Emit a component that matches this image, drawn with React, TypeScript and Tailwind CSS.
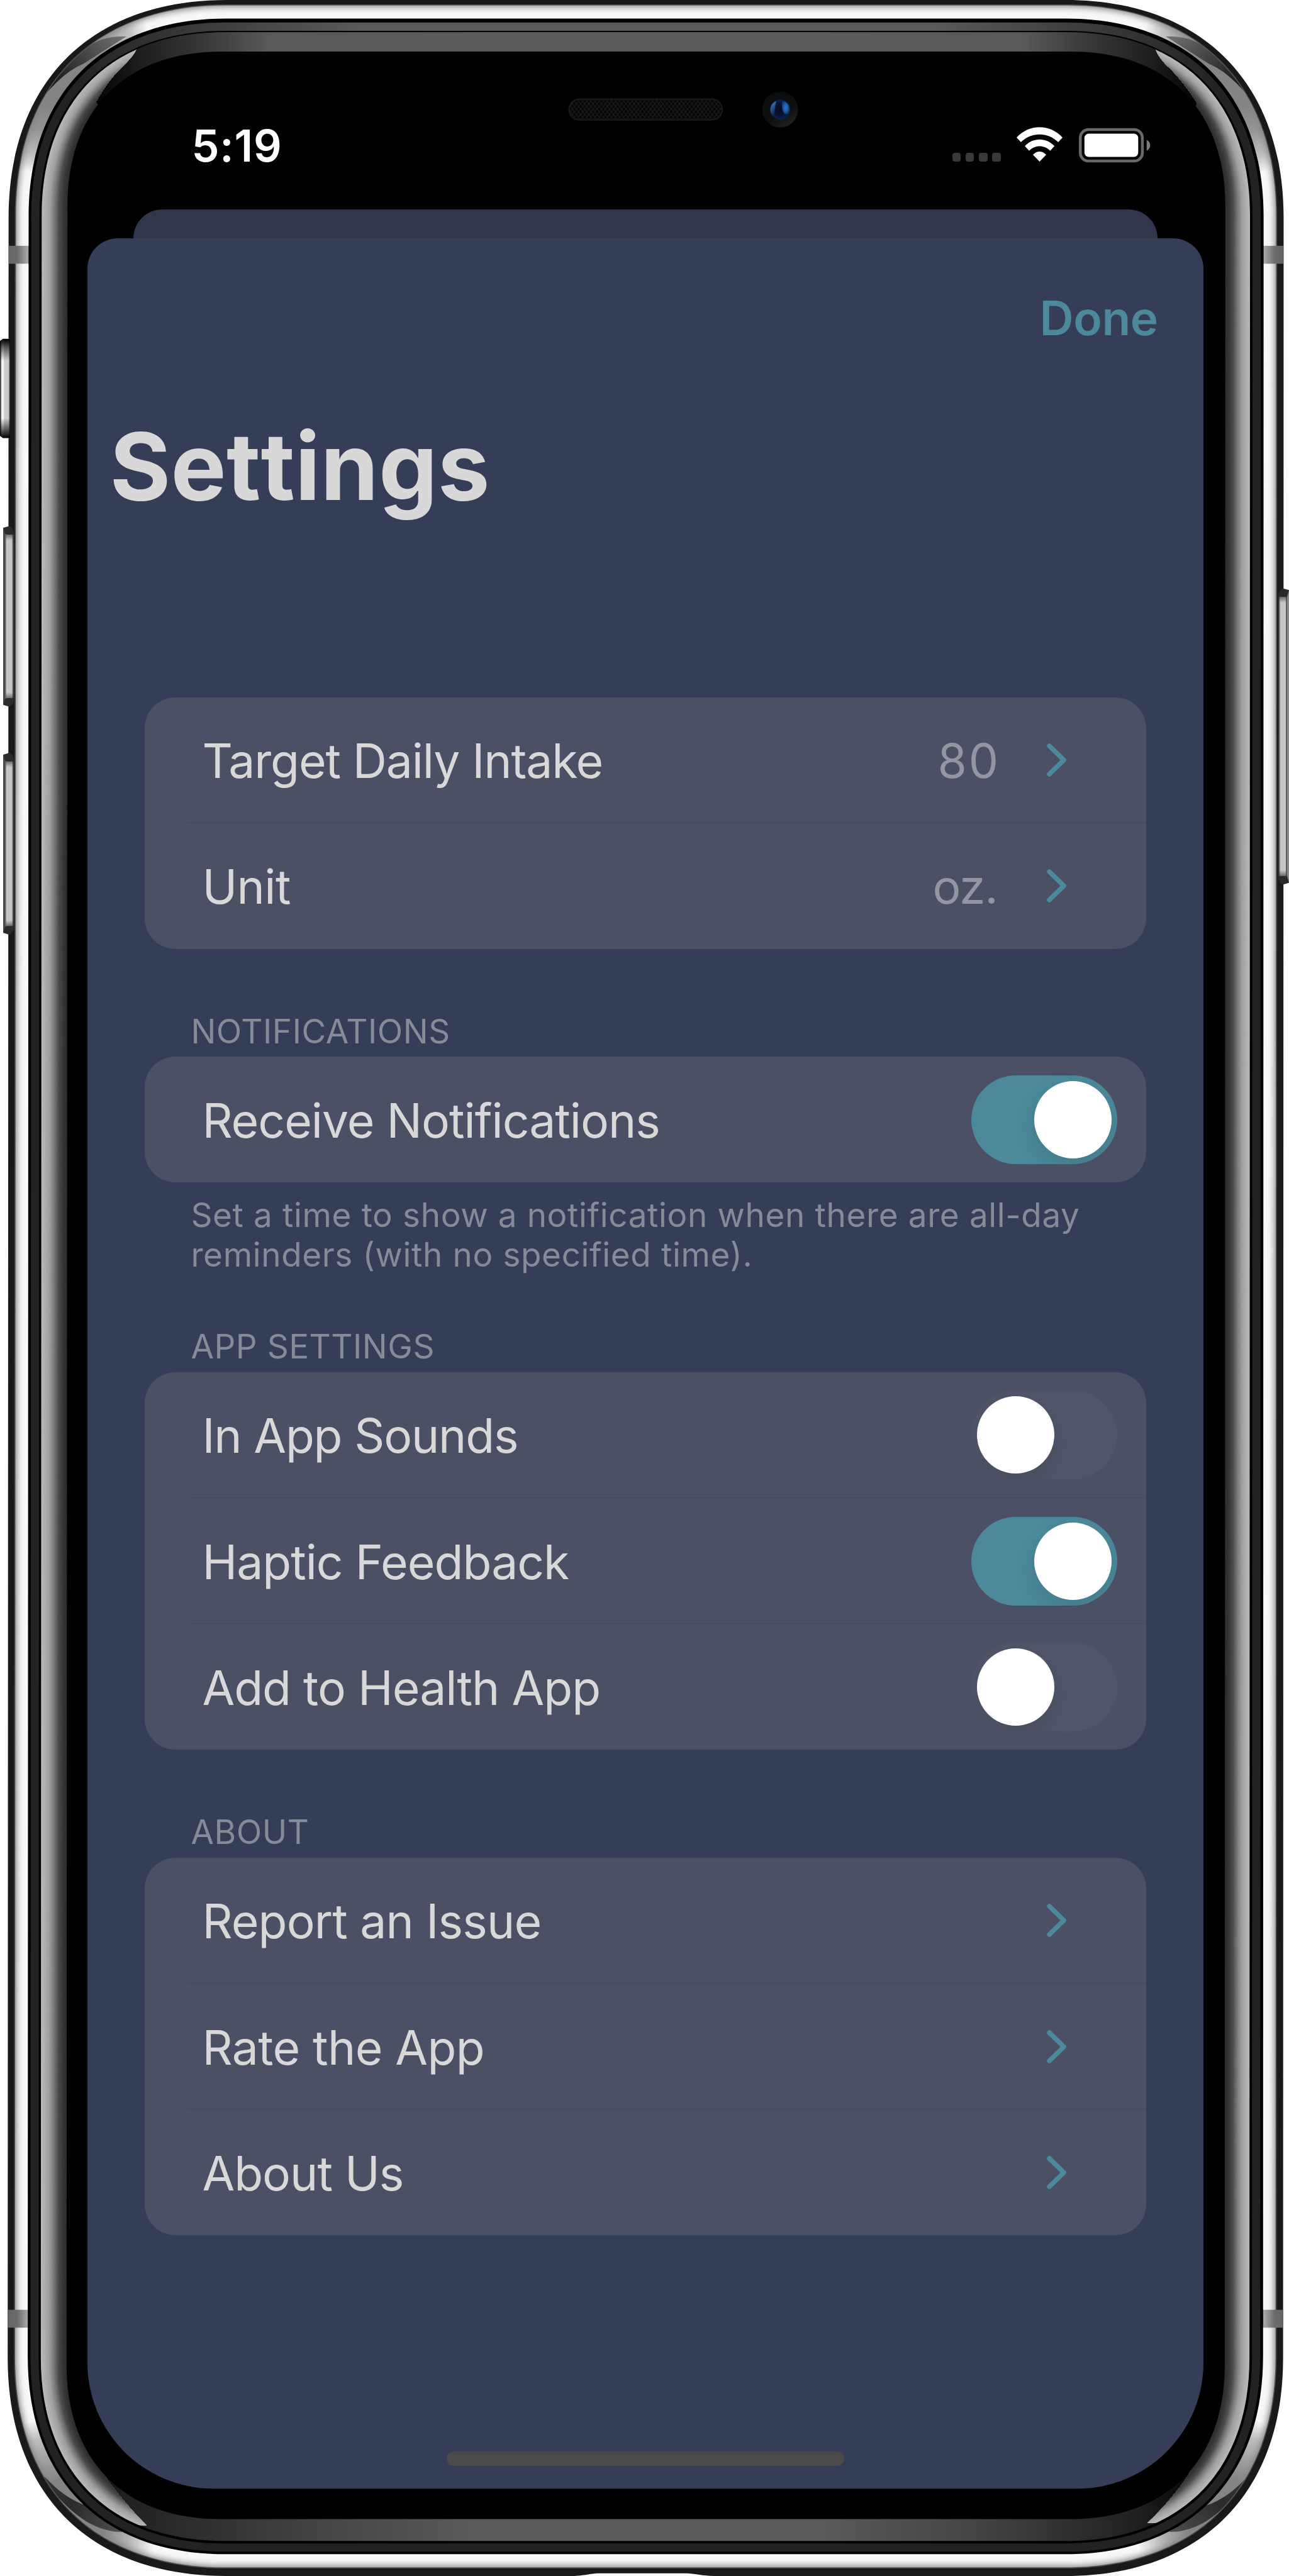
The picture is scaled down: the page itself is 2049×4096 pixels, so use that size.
import type { ReactNode } from "react";

type Edges = [number, number, number, number, number];

/* Rounded phone outline: left, top, right, bottom, corner radius. */
function outline([l, t, r, b, R]: Edges): string {
  const e = R * 1.1;
  const c = e * 0.377;
  const lb = l - 2.5;
  const rb = r - 1.5;
  return `M${l + e},${t}H${r - e}C${r - c},${t} ${r},${t + c} ${r},${t + e}L${rb},${b - e}C${rb},${b - c} ${rb - c},${b} ${rb - e},${b}H${lb + e}C${lb + c},${b} ${lb},${b - c} ${lb},${b - e}L${l},${t + e}C${l},${t + c} ${l + c},${t} ${l + e},${t}Z`;
}

function mix(a: Edges, b: Edges, k: number): Edges {
  return a.map((v, i) => v + (b[i] - v) * k) as Edges;
}

function ramp(stops: [number, number][], k: number): string {
  for (let i = 1; i < stops.length; i++) {
    if (k <= stops[i][0]) {
      const [k0, v0] = stops[i - 1];
      const [k1, v1] = stops[i];
      const v = Math.round(v0 + ((v1 - v0) * (k - k0)) / (k1 - k0));
      return `rgb(${v},${v},${v})`;
    }
  }
  const v = stops[stops.length - 1][1];
  return `rgb(${v},${v},${v})`;
}

const BODY: Edges = [24, 0, 3587, 7199, 554];
const LIP: Edges = [41.5, 12.5, 3569, 7178, 537];
const STEEL: Edges = [44.5, 15, 3566, 7175, 534];
const GAP: Edges = [80, 52, 3531, 7138, 502];
const GASKET: Edges = [87.5, 63, 3523, 7131, 494];
const SEAM: Edges = [110.5, 86, 3500, 7108, 471];
const BEZEL: Edges = [116.5, 90, 3493, 7101, 465];
const GLASS: Edges = [188.5, 144, 3424, 7040, 392];

const steps = (n: number) => Array.from({ length: n }, (_, i) => i / n);

function CornerShine() {
  return (
    <g>
      <path d="M0,130H190V480H0Z" fill="url(#shineSide)" />
      <path d="M120,0H470V300H120Z" fill="url(#shineTop)" />
      <path d="M40,280L120,273C150,235 190,196 232,179L353,102C310,100 255,108 204,166L120,230Z" fill="url(#swoosh)" />
      <path d="M0,6740H250V7060H0Z" fill="url(#shineSideB)" />
      <path d="M172,6900H520V7199H130Z" fill="url(#shineBottom)" />
      <path d="M100,6915L126,6923C160,6958 195,6988 244,7003L344,7076C290,7076 235,7055 172,6989Z" fill="url(#swooshB)" />
    </g>
  );
}

function SideKey({ x, y, h, flip }: { x: number; y: number; h: number; flip?: boolean }) {
  return (
    <g transform={flip ? `translate(${2 * x},0) scale(-1,1)` : undefined}>
      <path d={`M${x},${y + 5}L${x + 17},${y}Q${x + 30},${y + 4} ${x + 30},${y + 26}V${y + h - 26}Q${x + 30},${y + h - 4} ${x + 17},${y + h}L${x},${y + h - 5}Z`} fill="#2a2a2a" />
      <path d={`M${x},${y + 5}L${x + 7},${y + 30}V${y + h - 30}L${x},${y + h - 5}Z`} fill={flip ? "#8a8a8a" : "#4a4a4a"} />
      <rect x={x + 7} y={y + 24} width="22" height={h - 48} fill="url(#key)" />
      <rect x={x + 6} y={y + 22} width="2.5" height={h - 44} fill={flip ? "#4a4a4a" : "#8c8c8c"} />
      <rect x={x + 7} y={y + 12} width="22" height="28" fill="url(#keyTop)" />
      <rect x={x + 7} y={y + h - 40} width="22" height="28" fill="url(#keyBottom)" />
    </g>
  );
}

function Grey({ id, stops, ...rest }: { id: string; stops: [number, string, number?][]; x1: number; y1: number; x2: number; y2: number }) {
  return (
    <linearGradient id={id} gradientUnits="userSpaceOnUse" {...rest}>
      {stops.map(([o, c, a], i) => (
        <stop key={i} offset={o} stopColor={c} stopOpacity={a ?? 1} />
      ))}
    </linearGradient>
  );
}

function PhoneFrame() {
  return (
    <svg className="absolute inset-0 h-full w-full" viewBox="0 0 3602 7199" preserveAspectRatio="none" aria-hidden="true">
      <defs>
        <Grey id="shineSide" x1={60} y1={475} x2={125} y2={290} stops={[[0, "#848484", 0], [0.25, "#848484", 0.5], [0.6, "#848484", 0.85], [1, "#848484"]]} />
        <Grey id="shineTop" x1={410} y1={70} x2={250} y2={130} stops={[[0, "#848484", 0], [0.3, "#848484", 0.45], [1, "#848484"]]} />
        <Grey id="shineSideB" x1={92} y1={6765} x2={150} y2={6935} stops={[[0, "#848484", 0], [0.3, "#848484", 0.5], [1, "#848484"]]} />
        <Grey id="shineBottom" x1={430} y1={7121} x2={290} y2={7070} stops={[[0, "#848484", 0], [0.5, "#848484", 0.6], [1, "#848484"]]} />
        <Grey id="swoosh" x1={130} y1={270} x2={330} y2={90} stops={[[0, "#0c0c0c"], [0.5, "#3c3c3c"], [1, "#707070"]]} />
        <Grey id="swooshB" x1={130} y1={6930} x2={330} y2={7076} stops={[[0, "#333333"], [0.4, "#2b2b2b"], [1, "#4c4c4c"]]} />
        <Grey id="gasketTop" x1={200} y1={0} x2={3411} y2={0} stops={[[0, "#222222"], [0.25, "#595959"], [0.75, "#595959"], [1, "#222222"]]} />
        <Grey id="bezelTop" x1={255} y1={0} x2={3356} y2={0} stops={[[0, "#000000"], [0.045, "#1e1e1e"], [0.1, "#373737"], [0.16, "#595959"], [0.84, "#595959"], [0.9, "#373737"], [0.955, "#1e1e1e"], [1, "#000000"]]} />
        <Grey id="bezelBottom" x1={250} y1={0} x2={3361} y2={0} stops={[[0, "#000000"], [0.03, "#202020"], [0.2, "#434343"], [0.34, "#595959"], [0.66, "#595959"], [0.8, "#434343"], [0.94, "#202020"], [1, "#000000"]]} />
        <Grey id="antenna" x1={24} y1={0} x2={85} y2={0} stops={[[0, "#646464"], [0.4, "#6c6c6c"], [0.9, "#ababab"], [0.92, "#6a6a6a"], [1, "#6a6a6a"]]} />
        <linearGradient id="key">
          <stop offset="0" stopColor="#c9c9c9" />
          <stop offset="0.75" stopColor="#c4c4c4" />
          <stop offset="1" stopColor="#3a3a3a" />
        </linearGradient>
        <linearGradient id="keyTop" x1="0" y1="0" x2="0" y2="1">
          <stop offset="0" stopColor="#2a2a2a" />
          <stop offset="1" stopColor="#2a2a2a" stopOpacity="0" />
        </linearGradient>
        <linearGradient id="keyBottom" x1="0" y1="1" x2="0" y2="0">
          <stop offset="0" stopColor="#2a2a2a" />
          <stop offset="1" stopColor="#2a2a2a" stopOpacity="0" />
        </linearGradient>
        <linearGradient id="ringer">
          <stop offset="0" stopColor="#3a3a3a" />
          <stop offset="0.12" stopColor="#6a6a6a" />
          <stop offset="0.16" stopColor="#f4f4f4" />
          <stop offset="0.38" stopColor="#f2f2f2" />
          <stop offset="0.42" stopColor="#cccccc" />
          <stop offset="0.85" stopColor="#c8c8c8" />
          <stop offset="1" stopColor="#2a2a2a" />
        </linearGradient>
        <linearGradient id="ringerShade" x1="0" y1="0" x2="0" y2="1">
          <stop offset="0" stopColor="#000" />
          <stop offset="0.08" stopColor="#000" stopOpacity="0.6" />
          <stop offset="0.22" stopColor="#000" stopOpacity="0" />
          <stop offset="0.8" stopColor="#000" stopOpacity="0" />
          <stop offset="0.92" stopColor="#000" stopOpacity="0.6" />
          <stop offset="1" stopColor="#000" />
        </linearGradient>
        <pattern id="mesh" width="11.5" height="15" patternUnits="userSpaceOnUse" x="1588" y="275">
          <path d="M0,0L11.5,15M11.5,0L0,15" stroke="#262626" strokeWidth="1.6" fill="none" />
        </pattern>
        <linearGradient id="camRing" x1="0.2" y1="0" x2="0.8" y2="1">
          <stop offset="0" stopColor="#0b0c0d" />
          <stop offset="0.6" stopColor="#0d0e0f" />
          <stop offset="1" stopColor="#232425" />
        </linearGradient>
        <radialGradient id="lens">
          <stop offset="0" stopColor="#050b1c" />
          <stop offset="0.6" stopColor="#061434" />
          <stop offset="1" stopColor="#0a2350" />
        </radialGradient>
        <radialGradient id="glint">
          <stop offset="0" stopColor="#2b70c4" />
          <stop offset="0.5" stopColor="#2461ac" />
          <stop offset="1" stopColor="#123a78" />
        </radialGradient>
        <linearGradient id="glintLeft" x1="0" y1="0" x2="0.4" y2="1">
          <stop offset="0" stopColor="#5c93bf" />
          <stop offset="0.5" stopColor="#27578f" />
          <stop offset="1" stopColor="#0a2350" />
        </linearGradient>
        <clipPath id="steelClip"><path d={outline(STEEL)} /></clipPath>
        <clipPath id="topHalf"><path d="M0,0H3602V620H0Z" /></clipPath>
        <clipPath id="sides">
          <path d="M0,134H384C376,150 366,163 344,184C310,216 288,250 268,285L400,500V6700L247,6820C264,6868 280,6900 301,6931C330,6972 370,7018 410,7058H0Z" />
          <path d="M3602,134H3227C3235,154 3246,170 3270,192C3300,222 3325,256 3346,290L3210,500V6700L3366,6810C3350,6850 3344,6880 3322,6914C3295,6958 3250,7010 3206,7051H3602Z" />
        </clipPath>
      </defs>

      <path d={outline(BODY)} fill="#191919" />
      <path d="M0,953L8,947H28V1224H8L0,1218Z" fill="url(#ringer)" />
      <path d="M0,953L8,947H28V1224H8L0,1218Z" fill="url(#ringerShade)" />
      <SideKey x={9} y={1470} h={505} />
      <SideKey x={9} y={2104} h={508} />
      <SideKey x={3602} y={1644} h={828} flip />
      <path d="M1598,7199C1635,7198 1650,7192 1672,7191.5H1922C1945,7193 1960,7198 1996,7199Z" fill="#ffffff" />

      <path d={outline(LIP)} fill="#4b4b4b" />
      {steps(14).map((k) => (
        <path key={k} d={outline(mix(STEEL, GAP, k))} fill={ramp([[0, 172], [0.2, 212], [0.4, 238], [0.6, 247], [1, 249]], k)} />
      ))}
      <g clipPath="url(#steelClip)">
        <CornerShine />
        <g transform="translate(3611,0) scale(-1,1)">
          <CornerShine />
        </g>
      </g>
      <rect x="24" y="687" width="61" height="50" fill="url(#antenna)" />
      <rect x="22" y="6455" width="61" height="50" fill="url(#antenna)" />
      <g transform="translate(3610,0) scale(-1,1)">
        <rect x="24" y="687" width="61" height="50" fill="url(#antenna)" />
        <rect x="24" y="6455" width="61" height="50" fill="url(#antenna)" />
      </g>
      <path d={outline(GAP)} fill="#000000" />
      <path d={outline(GASKET)} fill="#222222" />
      <path d={outline(GASKET)} fill="url(#gasketTop)" clipPath="url(#topHalf)" />
      <path d={outline(SEAM)} fill="#000000" />
      <path d={outline(BEZEL)} fill="url(#bezelBottom)" />
      <path d={outline(BEZEL)} fill="url(#bezelTop)" clipPath="url(#topHalf)" />
      <g clipPath="url(#sides)">
        {steps(32).map((k) => (
          <path key={k} d={outline(mix(BEZEL, GLASS, k))} fill={ramp([[0, 184], [0.3, 160], [0.5, 118], [0.66, 76], [0.82, 56], [1, 44]], k)} />
        ))}
      </g>
      <path d={outline(GLASS)} fill="#000000" />

      <rect x="1590" y="277" width="428" height="58" rx="29" fill="#060606" stroke="#1a1a1a" strokeWidth="4" />
      <rect x="1592" y="279" width="424" height="54" rx="27" fill="url(#mesh)" />
      <circle cx="2180" cy="306" r="50" fill="url(#camRing)" />
      <circle cx="2180" cy="306" r="28" fill="url(#lens)" />
      <path d="M2169,283C2158,287 2152,298 2153,310C2154,316 2157,321 2162,324C2167,312 2165,296 2169,283Z" fill="url(#glintLeft)" />
      <path d="M2186,282C2198,283 2207,294 2206,308C2205,316 2200,320 2193,318C2185,312 2184,296 2186,282Z" fill="url(#glint)" />
    </svg>
  );
}

function StatusIcons() {
  return (
    <div className="flex items-start">
      <div className="mt-[41px] flex gap-[7.700px]">
        {[0, 1, 2, 3].map((i) => (
          <span key={i} className="h-[13.500px] w-[13.500px] rounded-[4px] bg-[#393939]" />
        ))}
      </div>
      <svg className="ml-[25px] h-[55px] w-[73px]" viewBox="0 0 128 96" aria-hidden="true">
        <path d="M0,29C35,-9.500 93,-9.500 128,29L116,42C87,13 41,13 12,42Z" fill="#fff" />
        <path d="M23,53C46,28.500 82,28.500 105.500,53L93.500,66C77,49 51.500,49 35,66Z" fill="#fff" />
        <path d="M45.500,77C56,65 72,65 82.500,77L64,96Z" fill="#fff" />
      </svg>
      <svg className="ml-[26px] mt-[1px] h-[56px] w-[114px]" viewBox="0 0 200 98" aria-hidden="true">
        <rect x="4" y="5" width="173" height="88" rx="23" fill="none" stroke="#696969" strokeWidth="8" />
        <rect x="15.500" y="16.500" width="150" height="65" rx="12" fill="#fff" />
        <path d="M189,34C202,39 202,59 189,64Z" fill="#7c7c7c" />
      </svg>
    </div>
  );
}

function Chevron() {
  return (
    <svg className="h-[53px] w-[32px]" viewBox="0 0 56 93" fill="none" stroke="#4b899b" strokeWidth="13" strokeLinecap="round" strokeLinejoin="round" aria-hidden="true">
      <path d="M7,7L47.500,46.500L7,86" />
    </svg>
  );
}

function Toggle({ on }: { on: boolean }) {
  return (
    <span className={`flex h-[141px] w-[232px] overflow-hidden rounded-full p-[9px] ${on ? "justify-end bg-[#4b899b]" : "justify-start bg-[#505569]"}`}>
      <span className="h-[123px] w-[123px] rounded-full bg-white shadow-[0_14px_36px_rgba(0,0,0,0.11)]" />
    </span>
  );
}

function Card({ children }: { children: ReactNode }) {
  return <div className="flex flex-col overflow-hidden rounded-[49px] bg-[#4b5065]">{children}</div>;
}

function Row({ label, tracking = "tracking-[-1px]", first, children }: { label: string; tracking?: string; first?: boolean; children: ReactNode }) {
  return (
    <div className="relative flex h-[200.240px] items-center justify-between pl-[91px]">
      {!first && <span className="absolute left-[68px] right-0 top-[-2px] h-[2px] bg-[#484c60]" />}
      <span className={`pt-[3px] text-[75px] leading-[90px] text-[#d8d8d8] ${tracking}`}>{label}</span>
      {children}
    </div>
  );
}

function LinkEnd({ value, fit = "" }: { value?: string; fit?: string }) {
  return (
    <span className="flex items-center pr-[126px]">
      {value && <span className={`pt-[3px] text-[75px] leading-[90px] text-[#9396a2] ${fit}`}>{value}</span>}
      <Chevron />
    </span>
  );
}

function ToggleEnd({ on }: { on: boolean }) {
  return (
    <span className="pr-[45.500px]">
      <Toggle on={on} />
    </span>
  );
}

function Header({ children }: { children: ReactNode }) {
  return <h2 className="pl-[73px] text-[53px] leading-[80.600px] tracking-[0.530px] text-[#878a97]">{children}</h2>;
}

export default function App() {
  return (
    <div className="relative h-[4096px] w-[2049px] overflow-hidden bg-white font-['Inter','Liberation_Sans',sans-serif]">
      <PhoneFrame />
      <div className="relative ml-[139.400px] flex h-[3957px] w-[1773.300px] flex-col">
        <div className="flex h-[332.800px] shrink-0 items-start justify-between pl-[165px] pr-[84px] pt-[202px]">
          <span className="-mt-[12px] text-[70px] font-semibold leading-[84px] tracking-[0.900px] text-white">5:19</span>
          <StatusIcons />
        </div>
        <div className="mx-[73px] h-[46px] shrink-0 rounded-t-[46px] bg-[#31364b]" />
        <div className="flex h-[3578.200px] shrink-0 flex-col rounded-t-[48px] rounded-b-[200px] bg-[#363d56]">
          <div className="flex justify-end pr-[72px] pt-[82px]">
            <span className="text-[75px] font-semibold leading-[90px] tracking-[-0.500px] text-[#4b899b]">Done</span>
          </div>
          <h1 className="pl-[35px] pt-[101px] text-[148px] font-bold leading-[180px] tracking-[0.300px] text-[#d8d8d8] [font-feature-settings:'calt'_0,'liga'_0,'kern'_0] [font-kerning:none]">Settings</h1>

          <div className="mx-[91px] mt-[276.800px] flex flex-col">
            <Card>
              <Row label="Target Daily Intake" tracking="tracking-[-1.130px]" first><LinkEnd value="80" fit="mr-[74px] tracking-[2.700px]" /></Row>
              <Row label="Unit" tracking="tracking-[-0.600px]"><LinkEnd value="oz." fit="mr-[78px] tracking-[-1.200px]" /></Row>
            </Card>

            <div className="h-[90.600px]" />
            <Header>NOTIFICATIONS</Header>
            <Card>
              <Row label="Receive Notifications" first><ToggleEnd on /></Row>
            </Card>
            <p className="whitespace-nowrap pl-[73px] pt-[20.500px] text-[53px] leading-[63.100px] tracking-[0.640px] text-[#878a97]">
              Set a time to show a notification when there are all-day
              <br />
              reminders (with no specified time).
            </p>

            <div className="h-[74px]" />
            <Header>APP SETTINGS</Header>
            <Card>
              <Row label="In App Sounds" tracking="tracking-[-1.200px]" first><ToggleEnd on={false} /></Row>
              <Row label="Haptic Feedback"><ToggleEnd on /></Row>
              <Row label="Add to Health App"><ToggleEnd on={false} /></Row>
            </Card>

            <div className="h-[90.600px]" />
            <Header>ABOUT</Header>
            <Card>
              <Row label="Report an Issue" tracking="tracking-[-0.850px]" first><LinkEnd /></Row>
              <Row label="Rate the App" tracking="tracking-[-0.600px]"><LinkEnd /></Row>
              <Row label="About Us"><LinkEnd /></Row>
            </Card>
          </div>
          <div className="mx-auto mb-[36px] mt-auto h-[23px] w-[632.500px] rounded-full bg-[#4a4a4a]" />
        </div>
      </div>
    </div>
  );
}
